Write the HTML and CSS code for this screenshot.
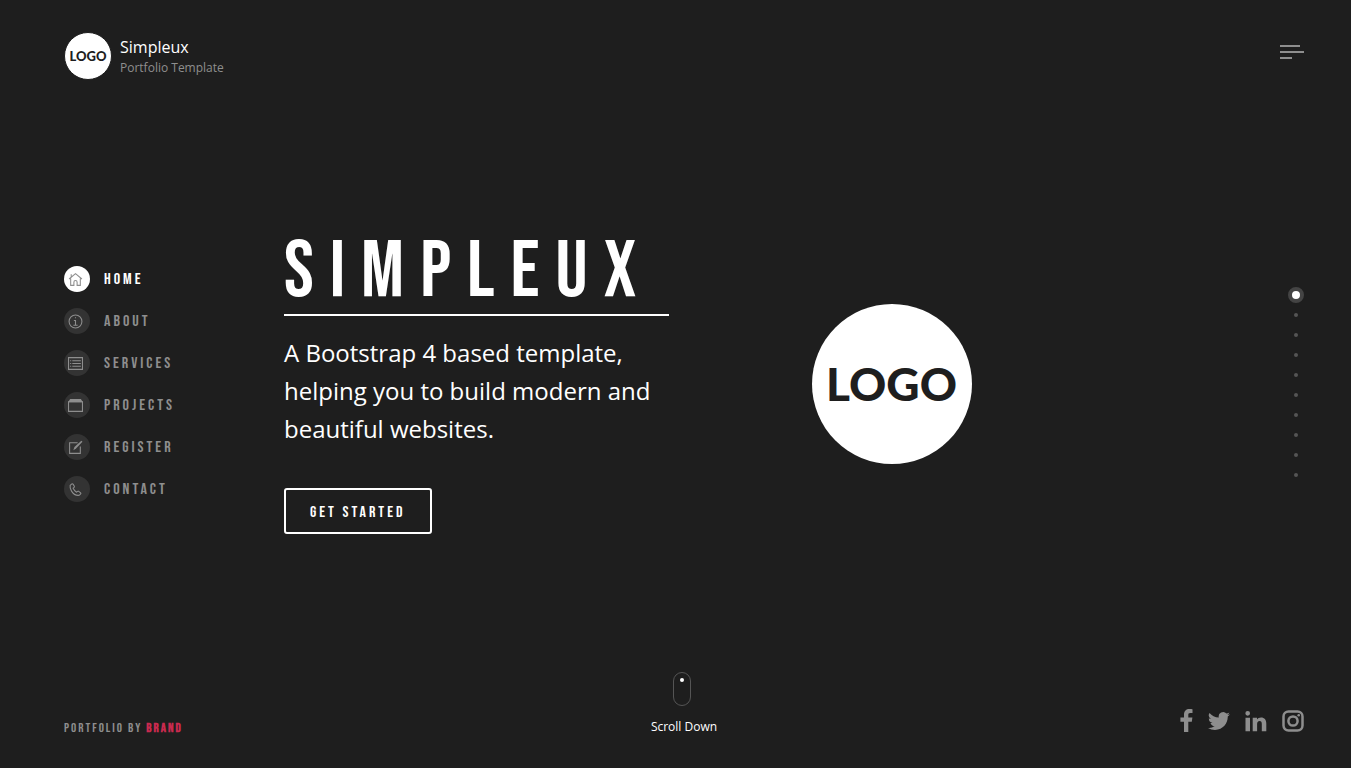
FILE: index.html
```html
<!DOCTYPE html>
<html lang="en">
<head>
<meta charset="utf-8">
<meta name="viewport" content="width=device-width, initial-scale=1">
<title>Simpleux</title>
<link rel="stylesheet" href="styles.css">
</head>
<body>
<header class="header">
  <a class="brand" href="#">
    <span class="logo logo-small">LOGO</span>
    <span class="brand-text"><span class="brand-name">Simpleux</span><span class="brand-tag">Portfolio Template</span></span>
  </a>
  <button class="menu-button" type="button" aria-label="Menu">
    <span class="bar bar-mid"></span><span class="bar"></span><span class="bar bar-short"></span>
  </button>
</header>

<main class="main">
  <nav class="nav" aria-label="Sections">
    <a class="nav-link active" href="#home"><span class="nav-icon"><svg viewBox="0 0 14 14"><path d="M1 6.500 7 1.500l6 5M3 2v2.500M2.500 6v6.500h3V9.500Q5.500 8 7 8t1.500 1.500v3h3V6"/></svg></span>Home</a>
    <a class="nav-link" href="#about"><span class="nav-icon"><svg viewBox="0 0 14 14"><circle cx="7" cy="7" r="6"/><path d="M5.500 6H7v4.500M5 10.500h4M6.500 3.500h1"/></svg></span>About</a>
    <a class="nav-link" href="#services"><span class="nav-icon"><svg viewBox="0 0 14 14"><path d="M.5 1.500h13v11H.5zM2 4.500h1m1 0h8M2 7h1m1 0h8M2 9.500h1m1 0h8"/></svg></span>Services</a>
    <a class="nav-link" href="#projects"><span class="nav-icon"><svg viewBox="0 0 14 14"><path class="solid" d="M2 1h10l2 3H0z"/><path d="M.5 3.500h13v9H.5z"/></svg></span>Projects</a>
    <a class="nav-link" href="#register"><span class="nav-icon"><svg viewBox="0 0 14 14"><path d="M9 2.500H1.500v10h10V6"/><path class="solid" d="m5 9.500 1-3L12.500.7l1 1-6 6.300z"/></svg></span>Register</a>
    <a class="nav-link" href="#contact"><span class="nav-icon"><svg viewBox="0 0 14 14"><path d="M2 3.200 3.600 1.800Q4.200 1.500 4.700 2l1.200 2q.3.600-.2 1l-.9.800q1 2.300 3.200 3.700l1-.8q.5-.4 1 0l1.800 1.400q.5.500 0 1l-1.300 1.300Q6 13 3.300 8.500 1.500 5.500 2 3.200z"/></svg></span>Contact</a>
  </nav>

  <section class="hero">
    <div class="hero-copy">
      <h1 class="hero-title">Simpleux</h1>
      <p class="hero-text">A Bootstrap 4 based template, helping you to build modern and beautiful websites.</p>
      <a class="cta" href="#register">Get Started</a>
    </div>
    <div class="hero-logo"><span class="logo logo-large">LOGO</span></div>
  </section>

  <nav class="dots" aria-label="Slides">
    <a class="dot current" href="#s1" aria-label="Slide 1"></a>
    <a class="dot" href="#s2" aria-label="Slide 2"></a>
    <a class="dot" href="#s3" aria-label="Slide 3"></a>
    <a class="dot" href="#s4" aria-label="Slide 4"></a>
    <a class="dot" href="#s5" aria-label="Slide 5"></a>
    <a class="dot" href="#s6" aria-label="Slide 6"></a>
    <a class="dot" href="#s7" aria-label="Slide 7"></a>
    <a class="dot" href="#s8" aria-label="Slide 8"></a>
    <a class="dot" href="#s9" aria-label="Slide 9"></a>
    <a class="dot" href="#s10" aria-label="Slide 10"></a>
  </nav>
</main>

<footer class="footer">
  <p class="credit">Portfolio by <a class="credit-link" href="#">Brand</a></p>
  <a class="scroll" href="#s2"><span class="mouse"></span>Scroll Down</a>
  <div class="social">
    <a href="#" aria-label="Facebook"><svg width="13" height="24" viewBox="0 0 13 24"><path d="M12.500.2v3.900h-2.300c-1.500 0-1.900.7-1.900 1.800v2.700h4.100l-.6 4.200H8.300V23H4V12.800H.4V8.600H4V5.500C4 2 6.200 0 9.400 0c1.400 0 2.700.1 3.100.2z"/></svg></a>
    <a href="#" aria-label="Twitter"><svg width="22" height="24" viewBox="0 0 24 24"><path d="M23.950 4.570a10 10 0 0 1-2.820.77 4.960 4.960 0 0 0 2.160-2.720c-.95.550-2 .95-3.130 1.180a4.920 4.920 0 0 0-8.380 4.480C7.690 8.090 4.070 6.130 1.640 3.160a4.930 4.930 0 0 0 1.520 6.570 4.900 4.900 0 0 1-2.230-.61v.06a4.920 4.920 0 0 0 3.950 4.830 5 5 0 0 1-2.210.08 4.940 4.940 0 0 0 4.600 3.420A9.870 9.870 0 0 1 0 19.540a14 14 0 0 0 7.550 2.210c9.050 0 14-7.500 14-13.980 0-.21 0-.42-.02-.63a9.900 9.900 0 0 0 2.420-2.570z"/></svg></a>
    <a href="#" aria-label="LinkedIn"><svg width="22" height="24" viewBox="0 0 22 24"><path d="M.5 8.700H5v13.500H.5zM2.700 2a2.350 2.350 0 1 1 0 4.700 2.350 2.350 0 0 1 0-4.700zM7.700 8.700H12v1.900c.8-1.300 2.200-2.200 4.100-2.200 3.300 0 5.200 2.200 5.200 6.200v7.600h-4.500V15c0-1.800-.6-2.900-2.200-2.900-1.700 0-2.500 1.300-2.500 3.100v7H7.700z"/></svg></a>
    <a href="#" aria-label="Instagram"><svg width="22" height="24" viewBox="0 0 22 24"><g class="outline"><rect x="1.500" y="2.500" width="19" height="19" rx="5"/><circle cx="11" cy="12" r="4.600"/></g><circle cx="16.700" cy="6.300" r="1.300"/></svg></a>
  </div>
</footer>
</body>
</html>
```
FILE: styles.css
```css
*, *::before { box-sizing: border-box; }
body {
  margin: 0;
  min-height: 100vh;
  display: grid;
  grid-template-rows: auto 1fr auto;
  background: #1e1e1e;
  color: #fff;
  font-family: "Open Sans", "Noto Sans", sans-serif;
}
a { color: inherit; text-decoration: none; }

.header, .main, .footer { padding: 0 47px 0 64px; }
.header {
  display: flex;
  align-items: center;
  justify-content: space-between;
  min-height: 112px;
}
.brand { display: flex; align-items: center; gap: 8px; }
.brand-text { display: flex; flex-direction: column; padding-top: 2px; }
.brand-name { font-size: 16px; line-height: 22px; }
.brand-tag { font-size: 12px; line-height: 20px; color: #8e8e8e; }
.logo {
  display: flex;
  align-items: center;
  justify-content: center;
  border-radius: 50%;
  background: #fff;
  color: #1e1e1e;
  font-family: Lato, sans-serif;
  font-weight: 900;
}
.logo-small { width: 48px; height: 48px; padding-bottom: 1px; border: 1px solid #1e1e1e; font-size: 13px; }
.logo-large { width: 160px; height: 160px; padding-bottom: 2px; font-size: 46px; }
.menu-button {
  display: flex;
  flex-direction: column;
  gap: 4px;
  width: 24px;
  margin-bottom: 8px;
  padding: 0;
  border: 0;
  background: none;
}
.bar { width: 24px; height: 2px; background: #8e8e8e; }
.bar-mid { width: 20px; }
.bar-short { width: 12px; }

.main {
  display: grid;
  grid-template-columns: 220px 1fr 220px;
  align-items: center;
}
.nav, .hero-title, .cta, .credit {
  font-family: "Bebas Neue", "Roboto Condensed", "Liberation Sans Narrow", "Liberation Sans", sans-serif;
  font-weight: 400;
  text-transform: uppercase;
}
.nav { display: flex; flex-direction: column; align-items: flex-start; gap: 16px; }
.nav-link {
  display: flex;
  align-items: center;
  gap: 14px;
  color: #8e8e8e;
  font-size: 16px;
  line-height: 30px;
  height: 26px;
  padding-top: 2px;
  letter-spacing: 3px;
}
.nav-link.active { color: #fff; }
.nav-icon {
  display: flex;
  align-items: center;
  width: 26px;
  height: 26px;
  margin-top: -2px;
  padding-left: 4px;
  border-radius: 50%;
  background: #333;
  color: #8e8e8e;
}
.active .nav-icon { background: #fff; }
.nav-icon svg { width: 15px; height: 15px; fill: none; stroke: currentColor; }
.nav-icon .solid { fill: currentColor; stroke: none; }

.hero { display: grid; grid-template-columns: 1fr 1fr; gap: 30px; align-items: center; }
.hero-title {
  margin: 0 0 18px;
  padding-bottom: 4px;
  border-bottom: 2px solid #fff;
  font-size: 80px;
  line-height: 76px;
  letter-spacing: 16px;
}
.hero-text { margin: 0 0 40px; font-size: 24px; line-height: 38px; }
.cta {
  display: inline-block;
  padding: 3px 25px 0 24px;
  border: 2px solid #fff;
  border-radius: 3px;
  font-size: 16px;
  line-height: 39px;
  letter-spacing: 3px;
}
.hero-logo { display: flex; justify-content: center; }

.dots { display: flex; flex-direction: column; align-items: center; justify-self: end; gap: 0; width: 16px; padding-top: 2px; }
.dot { display: flex; align-items: center; justify-content: center; width: 16px; height: 20px; }
.dot::before { content: ""; width: 4px; height: 4px; border-radius: 50%; background: #555; }
.dot.current::before { width: 16px; height: 16px; border: 4px solid #444; background: #fff; }

.footer {
  display: grid;
  grid-template-columns: 1fr auto 1fr;
  align-items: end;
  min-height: 112px;
  padding-bottom: 32px;
}
.credit { margin: 0; font-size: 13px; line-height: 16px; letter-spacing: 2px; color: #8e8e8e; }
.credit-link { color: #c92a4e; font-weight: 700; }
.scroll {
  display: flex;
  flex-direction: column;
  align-items: center;
  gap: 12px;
  font-size: 12px;
  line-height: 18px;
}
.mouse {
  display: flex;
  justify-content: center;
  width: 18px;
  height: 34px;
  margin-right: 4px;
  padding-top: 5px;
  border: 1px solid #555;
  border-radius: 9px;
}
.mouse::before { content: ""; width: 4px; height: 4px; border-radius: 50%; background: #fff; }
.social { display: flex; justify-content: flex-end; gap: 15px; padding-bottom: 3px; }
.social svg { display: block; fill: #8e8e8e; }
.social .outline { fill: none; stroke: #8e8e8e; stroke-width: 2.500; }
```
